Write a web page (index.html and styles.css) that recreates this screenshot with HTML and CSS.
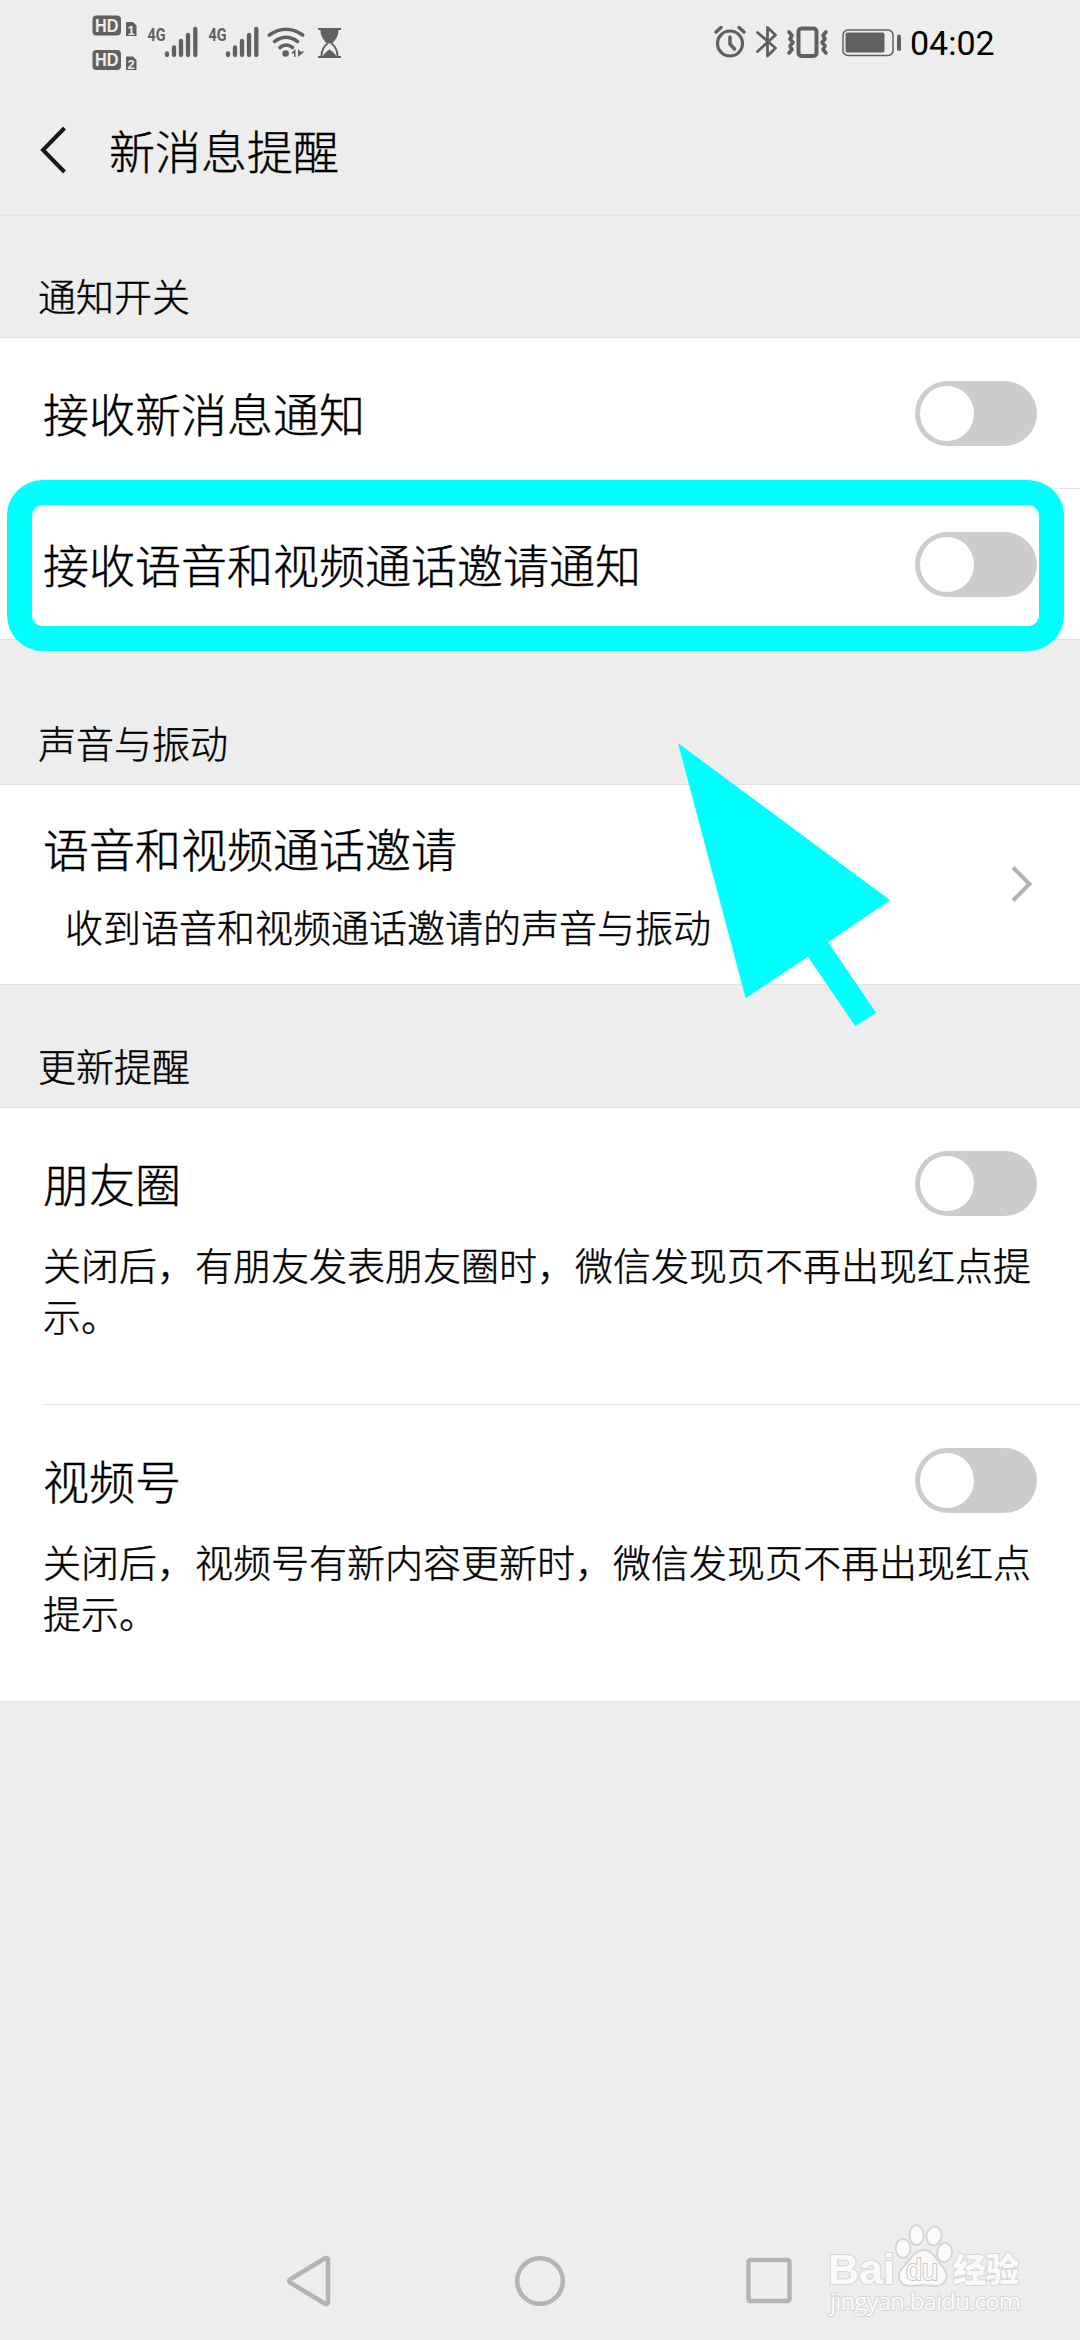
FILE: index.html
```html
<!DOCTYPE html>
<html lang="zh-CN">
<head>
<meta charset="utf-8">
<title>新消息提醒</title>
<link rel="stylesheet" href="styles.css">
</head>
<body>
<div class="screen">
  <div class="status">
    <svg class="status-left" width="250" height="60" viewBox="0 0 250 60" fill="#606060">
      <g class="badge">
        <rect x="0.5" y="3.5" width="28.5" height="20" rx="4"/>
        <rect x="0.5" y="38" width="28.5" height="20" rx="4"/>
        <path d="M34 11q0-1 1-1h6l3.500 3.500V24H34zM34 45.500q0-1 1-1h6l3.500 3.500v10H34z"/>
        <text class="hd" x="3" y="19.800" textLength="23.500" lengthAdjust="spacingAndGlyphs">HD</text>
        <text class="hd" x="3" y="54.300" textLength="23.500" lengthAdjust="spacingAndGlyphs">HD</text>
        <text class="sim" x="35.500" y="22.500">1</text>
        <text class="sim" x="35.500" y="56.500">2</text>
      </g>
      <g id="signal">
        <text class="net" x="55.500" y="28.500" textLength="18" lengthAdjust="spacingAndGlyphs">4G</text>
        <path d="M75 41.500v1.500M82 35.500v7.500M89 29v14M96 23v20M103.300 17v26" stroke="#606060" stroke-width="4.300" stroke-linecap="round"/>
      </g>
      <use href="#signal" x="61"/>
      <g fill="none" stroke="#606060" stroke-width="3.600" stroke-linecap="round">
        <path d="M177.300 23Q194 11.500 210.700 23M182.500 29.500Q194 21 205.500 29.500M188 35.500Q194 30.500 200.500 35.500"/>
      </g>
      <circle cx="193.600" cy="41.500" r="3.300"/>
      <path d="M199 41.500l4.500-4.500v8h-1.500v-3.500zM206 37v8l6.500-5.500h-4z"/>
      <path d="M226 16h23v2h-2.500c0 6-3 10-6.500 13.500h-5c-3.500-3.500-6.500-7.500-6.500-13.500h-2.500zM226 44h23v2h-23zM231 44q1-3 6.500-6.500q5.500 3.500 6.500 6.500z"/>
      <path d="M235.500 31.500q-6 4.500-6 12.500M239.500 31.500q6 4.500 6 12.500" fill="none" stroke="#606060" stroke-width="2"/>
    </svg>
    <div class="status-right">
      <svg width="190" height="36" viewBox="0 0 190 36" fill="none" stroke="#606060" stroke-linecap="round" stroke-linejoin="round">
        <circle cx="17" cy="19.500" r="12.500" stroke-width="3.200"/>
        <path d="M17 13v7l4.500 5" stroke-width="3.500"/>
        <path d="M3 8l5-4.500M26 3.500l5 4.500" stroke-width="3.500"/>
        <path d="M44.500 8.500l18 15.500-8 8V3.500l8 7.500-18 16.500" stroke-width="2.800"/>
        <rect x="85.500" y="4.500" width="18" height="27.500" rx="3" stroke-width="4"/>
        <path d="M76 8l3 3.500-2 3.500 3 3.500-3 3.500 2 3.500-3 3.500M113 8l-3 3.500 2 3.500-3 3.500 3 3.500-2 3.500 3 3.500" stroke-width="3.600"/>
        <rect x="130" y="6" width="50" height="25.500" rx="5" stroke-width="1.500"/>
        <rect x="132.500" y="8.500" width="39" height="20" rx="2" fill="#606060" stroke="none"/>
        <rect x="184" y="10.500" width="4" height="16.500" rx="2" fill="#606060" stroke="none"/>
      </svg>
      <span class="clock">04:02</span>
    </div>
  </div>

  <header class="titlebar">
    <svg class="back" width="28" height="50" viewBox="0 0 28 50"><path d="M24.500 3L3 25l21.500 22" fill="none" stroke="#191919" stroke-width="4"/></svg>
    <h1>新消息提醒</h1>
  </header>

  <h2 class="heading heading-first">通知开关</h2>
  <section class="group">
    <div class="row">
      <span class="label">接收新消息通知</span>
      <span class="switch"></span>
    </div>
    <div class="divider"></div>
    <div class="row">
      <span class="label">接收语音和视频通话邀请通知</span>
      <span class="switch"></span>
    </div>
  </section>

  <h2 class="heading heading-sound">声音与振动</h2>
  <section class="group link">
    <div class="link-text">
      <div class="label">语音和视频通话邀请</div>
      <div class="summary">收到语音和视频通话邀请的声音与振动</div>
    </div>
    <svg width="22" height="38" viewBox="0 0 22 38"><path d="M2 2.500L18.500 19 2 35.500" fill="none" stroke="#b2b2b2" stroke-width="4"/></svg>
  </section>

  <h2 class="heading heading-update">更新提醒</h2>
  <section class="group">
    <div class="item">
      <div class="item-head"><span class="label">朋友圈</span><span class="switch"></span></div>
      <p class="note">关闭后，有朋友发表朋友圈时，微信发现页不再出现红点提示。</p>
    </div>
    <div class="divider"></div>
    <div class="item">
      <div class="item-head"><span class="label">视频号</span><span class="switch"></span></div>
      <p class="note">关闭后，视频号有新内容更新时，微信发现页不再出现红点提示。</p>
    </div>
  </section>

  <nav class="navbar">
    <svg width="50" height="54" viewBox="0 0 50 54"><path d="M4 25.500L39.500 4Q42 3.500 42 6v42q0 2.500-2.500 2L4 28.500Q2.500 27 4 25.500z"/></svg>
    <svg width="54" height="54" viewBox="0 0 54 54"><circle cx="27" cy="27" r="22.800"/></svg>
    <svg width="50" height="54" viewBox="0 0 50 54"><rect x="4.500" y="6" width="41" height="41" rx="2"/></svg>
  </nav>

  <div class="highlight"></div>
  <svg class="pointer" width="214" height="285" viewBox="0 0 214 285"><path d="M0 0L212.200 157.300 150.200 199.300 198.100 269.700 177.400 283.300 129.900 213.700 67.600 255.300z" fill="#0ff"/></svg>

  <svg class="watermark" width="210" height="110" viewBox="0 0 210 110" fill="#fafafa" stroke="#d6d6d6" stroke-width="2">
    <text class="mark-latin" x="6" y="64" textLength="67" lengthAdjust="spacingAndGlyphs">Bai</text>
    <ellipse cx="81" cy="28.500" rx="7.500" ry="9.500"/>
    <ellipse cx="94.500" cy="15" rx="7" ry="10"/>
    <ellipse cx="112" cy="16" rx="7.500" ry="9.500" transform="rotate(12 112 16)"/>
    <ellipse cx="122.500" cy="32.500" rx="7.500" ry="9.500" transform="rotate(8 122.500 32.500)"/>
    <path d="M102 30c9 0 12 10 18 16 8 8 5 20-7 20-5 0-7-1-12-1s-8 1-13 1c-12 0-14-12-7-19 7-6 11-17 21-17z"/>
    <text class="mark-du" x="84" y="60" textLength="32" lengthAdjust="spacingAndGlyphs">du</text>
    <text class="mark-cjk" x="131" y="62" textLength="66">经验</text>
    <text class="mark-url" x="8" y="90" textLength="191">jingyan.baidu.com</text>
  </svg>
</div>
</body>
</html>
```

FILE: styles.css
```css
* { box-sizing: border-box; }

body {
  margin: 0;
  background: #ededed;
  color: #000;
  font-family: "Noto Sans CJK SC", sans-serif;
  font-weight: 300;
}

h1, h2, p { margin: 0; font-weight: inherit; }
h1, h2, .label, .summary, .note { -webkit-text-stroke: 0.4px #000; }
svg { display: block; flex: none; }

.screen {
  position: relative;
  display: flex;
  flex-direction: column;
  width: 1080px;
  height: 2340px;
  overflow: hidden;
}

.status {
  display: flex;
  justify-content: space-between;
  height: 84px;
  padding: 12px 87px 0 92px;
}
.status-right {
  display: flex;
  align-items: center;
  gap: 7px;
  height: 60px;
}
.clock {
  width: 83px;
  padding-top: 2px;
  color: #000;
  font: 400 34px/36px Roboto, sans-serif;
}

.hd { font: 700 19px "Liberation Sans", sans-serif; fill: #ededed; }
.sim { font: 700 13px "Liberation Sans", sans-serif; fill: #ededed; }
.net { font: 700 19px Roboto, sans-serif; }

.titlebar {
  display: flex;
  align-items: center;
  gap: 41px;
  height: 132px;
  padding: 0 0 1px 40px;
  border-bottom: 1px solid #e2e2e2;
}
.back { margin-top: 2px; }
.titlebar h1 {
  font-size: 46px;
  line-height: 60px;
}

.heading {
  display: flex;
  align-items: flex-end;
  padding: 0 38px 22px;
  border-bottom: 1px solid #e1e1e1;
  font-size: 38px;
  line-height: 40px;
}
.heading-first { height: 122px; }
.heading-sound { height: 145px; }
.heading-update { height: 123px; }

.group {
  background: #fff;
  border-bottom: 1px solid #e1e1e1;
}
.divider {
  height: 1px;
  margin-left: 43px;
  background: #e3e3e3;
}
.row {
  display: flex;
  align-items: center;
  justify-content: space-between;
  height: 150px;
  padding: 0 43px;
}
.label {
  font-size: 46px;
  line-height: 60px;
}
.row .label,
.item .label { padding-bottom: 3px; }

.switch {
  width: 122px;
  height: 65px;
  padding: 5px;
  border-radius: 33px;
  background: #ccc;
}
.switch::before {
  content: "";
  display: block;
  width: 54px;
  height: 55px;
  border-radius: 50%;
  background: #fff;
}

.link {
  display: flex;
  align-items: center;
  justify-content: space-between;
  height: 200px;
  padding: 0 47px 1px 43px;
}
.summary {
  margin-top: 24px;
  padding-left: 22px;
  font-size: 38px;
  line-height: 50px;
}

.item {
  height: 296px;
  padding: 43px 43px 0;
}
.item-head {
  display: flex;
  align-items: center;
  justify-content: space-between;
  height: 65px;
}
.note {
  margin-top: 22px;
  font-size: 38px;
  line-height: 51px;
}

.navbar {
  display: flex;
  justify-content: space-between;
  margin-top: auto;
  height: 86px;
  padding: 0 286px;
}
.navbar svg {
  fill: none;
  stroke: #b4b4b4;
  stroke-width: 4.500px;
}

.highlight {
  position: absolute;
  left: 7px;
  top: 480px;
  width: 1057px;
  height: 171px;
  border: 25px solid #0ff;
  border-radius: 36px;
}
.pointer {
  position: absolute;
  left: 678px;
  top: 743px;
}
.watermark {
  position: absolute;
  left: 822px;
  top: 2220px;
}
.watermark text { paint-order: stroke; }
.mark-latin { font: 700 42px "Liberation Sans", sans-serif; }
.mark-du { font: 400 29px "Liberation Sans", sans-serif; stroke: #c8c8c8; }
.mark-cjk { font: 900 33px "Noto Sans CJK SC", sans-serif; }
.mark-url { font: 400 24px "Open Sans", sans-serif; }
```
